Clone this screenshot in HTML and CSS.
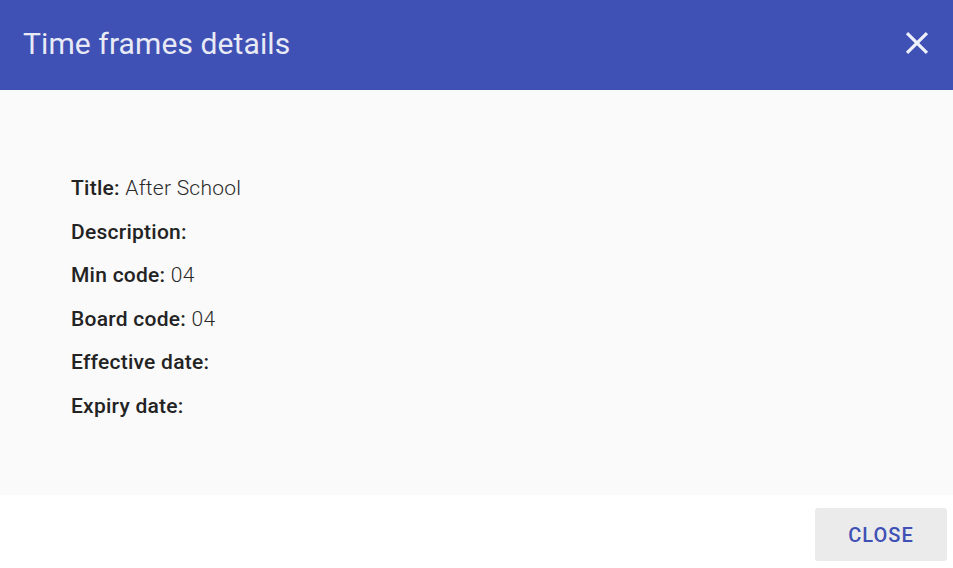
FILE: index.html
```html
<!DOCTYPE html>
<html>
<head>
<meta charset="utf-8">
<link rel="stylesheet" href="styles.css">
</head>
<body>
<div class="dialog">
  <header class="bar">
    <h1 class="bar-title">Time frames details</h1>
    <button class="icon-btn" aria-label="close">
      <svg viewBox="0 0 24 24"><path d="M19 6.41L17.59 5 12 10.59 6.41 5 5 6.41 10.59 12 5 17.59 6.41 19 12 13.41 17.59 19 19 17.59 13.41 12z" fill="currentColor"/></svg>
    </button>
  </header>
  <main class="content">
    <ul class="details">
      <li><span class="label">Title:</span> <span class="value">After School</span></li>
      <li><span class="label">Description:</span> <span class="value"></span></li>
      <li><span class="label">Min code:</span> <span class="value">04</span></li>
      <li><span class="label">Board code:</span> <span class="value">04</span></li>
      <li><span class="label">Effective date:</span> <span class="value"></span></li>
      <li><span class="label">Expiry date:</span> <span class="value"></span></li>
    </ul>
  </main>
  <footer class="actions">
    <button class="text-btn">Close</button>
  </footer>
</div>
</body>
</html>
```
FILE: styles.css
```css
* { box-sizing: border-box; }
html, body { margin: 0; padding: 0; }
body {
  font-family: Roboto, "Noto Sans", sans-serif;
  background: #ffffff;
  width: 953px;
  height: 568px;
  overflow: hidden;
}
.dialog {
  display: flex;
  flex-direction: column;
  height: 568px;
}
.bar {
  height: 90px;
  background: #3f51b5;
  display: flex;
  align-items: center;
  justify-content: space-between;
  padding: 0 17px 0 23px;
}
.bar-title {
  margin: 0;
  font-size: 30px;
  font-weight: 400;
  color: #e8eaf6;
  letter-spacing: 0.1px;
  padding-bottom: 4px;
}
.icon-btn {
  background: none;
  border: 0;
  padding: 0;
  color: #eef0fa;
  width: 38px;
  height: 38px;
  display: flex;
  align-items: center;
  justify-content: center;
  margin-bottom: 5px;
}
.icon-btn svg { width: 38px; height: 38px; }
.content {
  height: 405px;
  background: #fafafa;
  padding: 77px 71px 0;
}
.details {
  list-style: none;
  margin: 0;
  padding: 0;
  font-size: 21px;
  letter-spacing: 0.25px;
  color: #232323;
}
.details li {
  height: 43.5px;
  line-height: 43.5px;
}
.label { font-weight: 500; }
.value { font-weight: 300; color: #2a2a2a; }
.actions {
  flex: 1;
  display: flex;
  justify-content: flex-end;
  align-items: flex-start;
  padding: 13px 6px 0 0;
}
.text-btn {
  width: 132px;
  height: 53px;
  background: #ebebeb;
  border: 0;
  border-radius: 3px;
  color: #3f51b5;
  font-family: Roboto, sans-serif;
  font-size: 20px;
  font-weight: 500;
  text-transform: uppercase;
  letter-spacing: 1px;
}
```
